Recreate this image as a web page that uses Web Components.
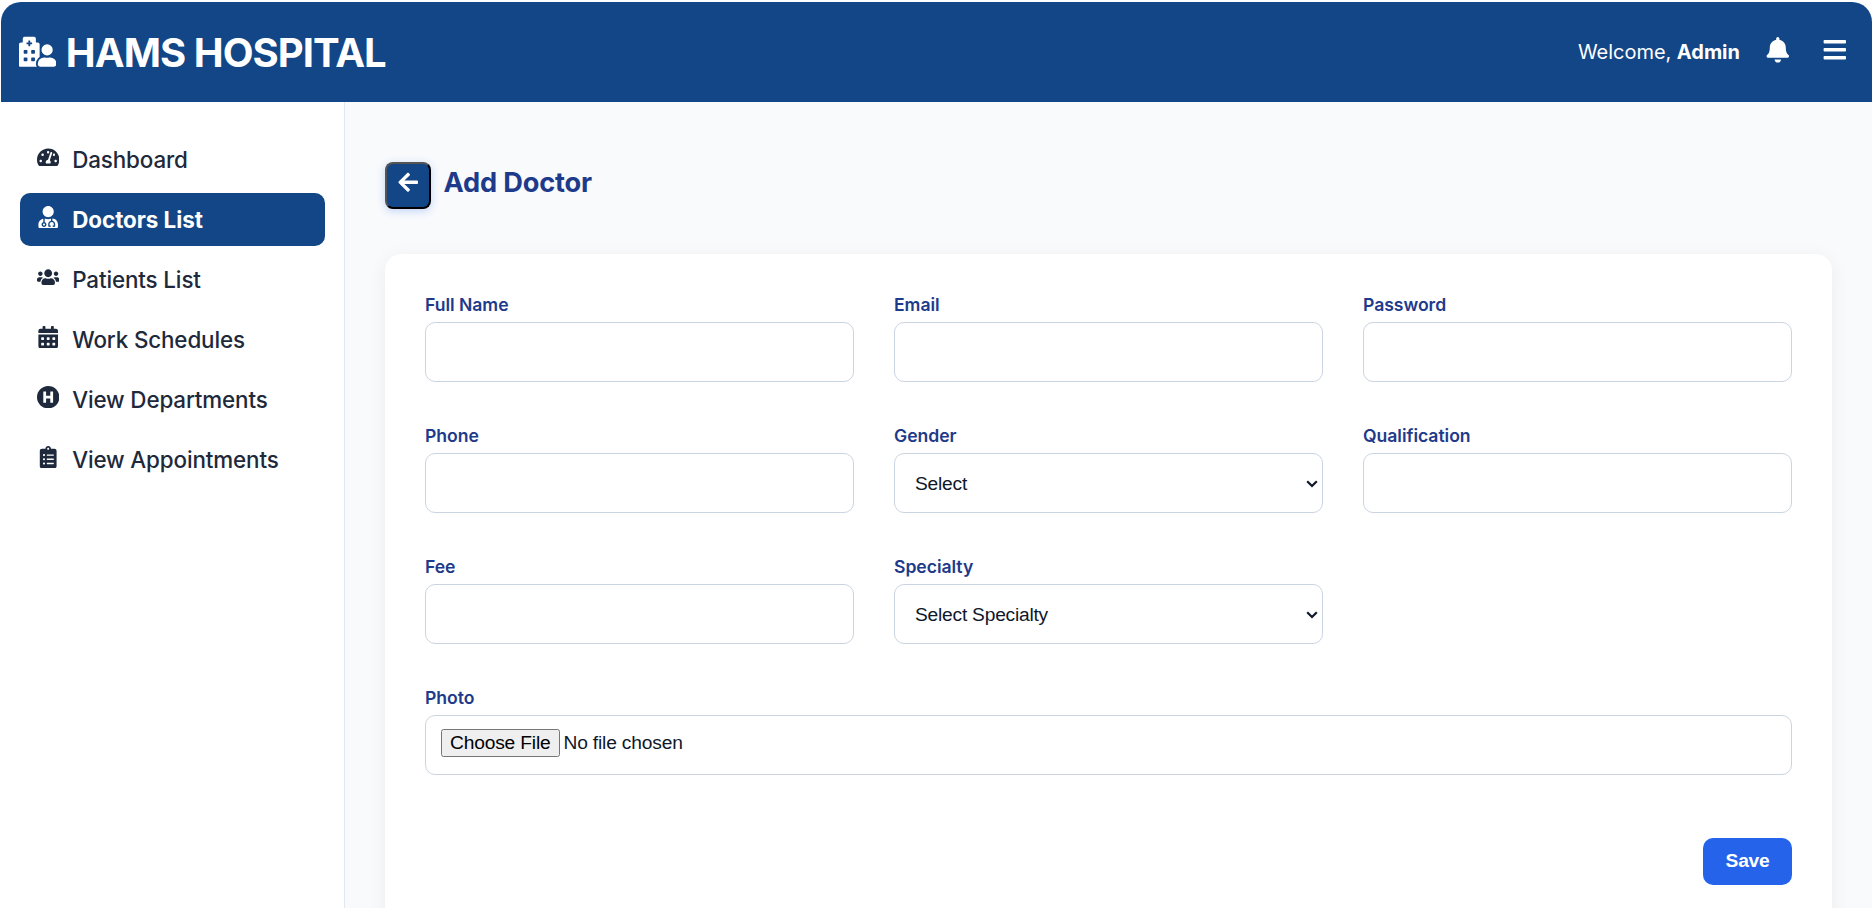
<!DOCTYPE html>
<html lang="en">
<head>
<meta charset="utf-8">
<title>HAMS Hospital - Add Doctor</title>
<style>
  html, body { margin: 0; height: 100%; background: #fff; }
  body { font-family: Inter, "Liberation Sans", sans-serif; overflow: hidden; }
</style>
</head>
<body>
<hams-app>
  <hams-header slot="header" heading="HAMS HOSPITAL" user="Admin"></hams-header>
  <hams-sidebar slot="sidebar">
    <hams-nav-item icon="dashboard">Dashboard</hams-nav-item>
    <hams-nav-item icon="doctor" active>Doctors List</hams-nav-item>
    <hams-nav-item icon="patients">Patients List</hams-nav-item>
    <hams-nav-item icon="calendar">Work Schedules</hams-nav-item>
    <hams-nav-item icon="hospital">View Departments</hams-nav-item>
    <hams-nav-item icon="clipboard">View Appointments</hams-nav-item>
  </hams-sidebar>
  <hams-page-title>Add Doctor</hams-page-title>
  <hams-form-card>
    <hams-field label="Full Name"></hams-field>
    <hams-field label="Email"></hams-field>
    <hams-field label="Password" kind="password"></hams-field>
    <hams-field label="Phone"></hams-field>
    <hams-field label="Gender" kind="select" placeholder="Select"></hams-field>
    <hams-field label="Qualification"></hams-field>
    <hams-field label="Fee"></hams-field>
    <hams-field label="Specialty" kind="select" placeholder="Select Specialty"></hams-field>
    <hams-field label="Photo" kind="file" wide></hams-field>
    <hams-save-button slot="actions">Save</hams-save-button>
  </hams-form-card>
</hams-app>
<script>
const ICONS = {
  logo: ['0 0 640 512', 'M480 320a96 96 0 1 0-96-96 96 96 0 0 0 96 96zm48 32a22.88 22.88 0 0 0-7.06 1.09 124.76 124.76 0 0 1-81.88 0A22.82 22.82 0 0 0 432 352a112 112 0 0 0-112 112.62c.14 26.26 21.73 47.38 48 47.38h224c26.27 0 47.86-21.12 48-47.38A112 112 0 0 0 528 352zm-198.09 10.45A145.19 145.19 0 0 1 352 344.62V128a32 32 0 0 0-32-32h-32V32a32 32 0 0 0-32-32H96a32 32 0 0 0-32 32v64H32a32 32 0 0 0-32 32v368a16 16 0 0 0 16 16h288.31A78.62 78.62 0 0 1 288 464.79a143.06 143.06 0 0 1 41.91-102.34zM144 404a12 12 0 0 1-12 12H92a12 12 0 0 1-12-12v-40a12 12 0 0 1 12-12h40a12 12 0 0 1 12 12zm0-128a12 12 0 0 1-12 12H92a12 12 0 0 1-12-12v-40a12 12 0 0 1 12-12h40a12 12 0 0 1 12 12zm48-122a6 6 0 0 1-6 6h-20a6 6 0 0 1-6-6v-26h-26a6 6 0 0 1-6-6v-20a6 6 0 0 1 6-6h26V70a6 6 0 0 1 6-6h20a6 6 0 0 1 6 6v26h26a6 6 0 0 1 6 6v20a6 6 0 0 1-6 6h-26zm80 250a12 12 0 0 1-12 12h-40a12 12 0 0 1-12-12v-40a12 12 0 0 1 12-12h40a12 12 0 0 1 12 12zm0-128a12 12 0 0 1-12 12h-40a12 12 0 0 1-12-12v-40a12 12 0 0 1 12-12h40a12 12 0 0 1 12 12z'],
  bell: ['0 0 448 512', 'M224 512c35.32 0 63.97-28.65 63.97-64H160.03c0 35.35 28.65 64 63.97 64zm215.39-149.71c-19.32-20.76-55.47-51.99-55.47-154.29 0-77.7-54.48-139.9-127.94-155.16V32c0-17.67-14.32-32-31.98-32s-31.98 14.33-31.98 32v20.84C118.56 68.1 64.08 130.3 64.08 208c0 102.3-36.15 133.53-55.47 154.29-6 6.45-8.66 14.16-8.61 21.71.11 16.4 12.98 32 32.1 32h383.8c19.12 0 32-15.6 32.1-32 .05-7.55-2.61-15.27-8.61-21.71z'],
  bars: ['0 0 448 512', 'M16 132h416c8.837 0 16-7.163 16-16V76c0-8.837-7.163-16-16-16H16C7.163 60 0 67.163 0 76v40c0 8.837 7.163 16 16 16zm0 160h416c8.837 0 16-7.163 16-16v-40c0-8.837-7.163-16-16-16H16c-8.837 0-16 7.163-16 16v40c0 8.837 7.163 16 16 16zm0 160h416c8.837 0 16-7.163 16-16v-40c0-8.837-7.163-16-16-16H16c-8.837 0-16 7.163-16 16v40c0 8.837 7.163 16 16 16z'],
  back: ['0 0 448 512', 'M257.5 445.1l-22.2 22.2c-9.4 9.4-24.6 9.4-33.9 0L7 273c-9.4-9.4-9.4-24.6 0-33.9L201.4 44.7c9.4-9.4 24.6-9.4 33.9 0l22.2 22.2c9.5 9.5 9.3 25-.4 34.3L136.6 216H424c13.3 0 24 10.7 24 24v32c0 13.3-10.7 24-24 24H136.6l120.5 114.8c9.8 9.3 10 24.8.4 34.3z'],
  dashboard: ['0 0 576 512', 'M288 32C128.94 32 0 160.94 0 320c0 52.8 14.25 102.26 39.06 144.8 5.61 9.62 16.3 15.2 27.44 15.2h443c11.14 0 21.83-5.58 27.44-15.2C561.75 422.26 576 372.8 576 320c0-159.06-128.94-288-288-288zm0 64c14.71 0 26.58 10.13 30.32 23.65-1.11 2.26-2.64 4.23-3.45 6.67l-9.22 27.67c-5.13 3.49-10.97 6.01-17.64 6.01-17.67 0-32-14.33-32-32S270.33 96 288 96zM96 384c-17.67 0-32-14.33-32-32s14.33-32 32-32 32 14.33 32 32-14.33 32-32 32zm48-160c-17.67 0-32-14.33-32-32s14.33-32 32-32 32 14.33 32 32-14.33 32-32 32zm246.77-72.41l-61.33 184C343.13 347.33 352 364.54 352 384c0 11.72-3.38 22.55-8.88 32H232.88c-5.5-9.45-8.88-20.28-8.88-32 0-33.94 26.5-61.43 59.9-63.59l61.34-184.01c4.17-12.56 17.73-19.45 30.36-15.17 12.57 4.19 19.35 17.79 15.17 30.36zm14.66 57.2l15.52-46.55c3.47-1.29 7.13-2.23 11.05-2.23 17.67 0 32 14.33 32 32s-14.33 32-32 32c-11.38-.01-20.89-6.28-26.57-15.22zM480 384c-17.67 0-32-14.33-32-32s14.33-32 32-32 32 14.33 32 32-14.33 32-32 32z'],
  doctor: ['0 0 448 512', 'M224 256c70.7 0 128-57.3 128-128S294.7 0 224 0 96 57.3 96 128s57.3 128 128 128zM104 424c0 13.3 10.7 24 24 24s24-10.7 24-24-10.7-24-24-24-24 10.7-24 24zm216-135.4v49c36.5 7.4 64 39.8 64 78.4v41.7c0 7.6-5.4 14.2-12.9 15.7l-32.2 6.4c-4.3.9-8.5-1.9-9.4-6.3l-3.1-15.7c-.9-4.3 1.9-8.6 6.3-9.4l19.3-3.9V416c0-62.8-96-65.1-96 1.9v26.7l19.3 3.9c4.3.9 7.1 5.1 6.3 9.4l-3.1 15.7c-.9 4.3-5.1 7.1-9.4 6.3l-31.2-4.2c-7.9-1.1-13.8-7.8-13.8-15.9V416c0-38.6 27.5-70.9 64-78.4v-45.2c-2.2.7-4.4 1.1-6.6 1.9-18 6.3-37.3 9.8-57.4 9.8s-39.4-3.5-57.4-9.8c-7.4-2.6-14.9-4.2-22.6-5.2v81.6c23.1 6.9 40 28.1 40 53.4 0 30.9-25.1 56-56 56s-56-25.1-56-56c0-25.3 16.9-46.5 40-53.4v-80.4C48.5 301 0 355.8 0 422.4v44.8C0 491.9 20.1 512 44.8 512h358.4c24.7 0 44.8-20.1 44.8-44.8v-44.8c0-72-56.8-130.3-128-133.8z'],
  patients: ['0 0 640 512', 'M96 224c35.3 0 64-28.7 64-64s-28.7-64-64-64-64 28.7-64 64 28.7 64 64 64zm448 0c35.3 0 64-28.7 64-64s-28.7-64-64-64-64 28.7-64 64 28.7 64 64 64zm32 32h-64c-17.6 0-33.5 7.1-45.1 18.6 40.3 22.1 68.9 62 75.1 109.4h66c17.7 0 32-14.3 32-32v-32c0-35.3-28.7-64-64-64zm-256 0c61.9 0 112-50.1 112-112S381.9 32 320 32 208 82.1 208 144s50.1 112 112 112zm76.8 32h-8.3c-20.8 10-43.9 16-68.5 16s-47.6-6-68.5-16h-8.3C179.6 288 128 339.6 128 403.2V432c0 26.5 21.5 48 48 48h288c26.5 0 48-21.5 48-48v-28.8c0-63.6-51.6-115.2-115.2-115.2zm-223.7-13.4C161.5 263.1 145.6 256 128 256H64c-35.3 0-64 28.7-64 64v32c0 17.7 14.3 32 32 32h65.9c6.3-47.4 34.9-87.3 75.2-109.4z'],
  calendar: ['0 0 448 512', 'M0 464c0 26.5 21.5 48 48 48h352c26.5 0 48-21.5 48-48V192H0v272zm320-196c0-6.6 5.4-12 12-12h40c6.6 0 12 5.4 12 12v40c0 6.6-5.4 12-12 12h-40c-6.6 0-12-5.4-12-12v-40zm0 128c0-6.6 5.4-12 12-12h40c6.6 0 12 5.4 12 12v40c0 6.6-5.4 12-12 12h-40c-6.6 0-12-5.4-12-12v-40zM192 268c0-6.6 5.4-12 12-12h40c6.6 0 12 5.4 12 12v40c0 6.6-5.4 12-12 12h-40c-6.6 0-12-5.4-12-12v-40zm0 128c0-6.6 5.4-12 12-12h40c6.6 0 12 5.4 12 12v40c0 6.6-5.4 12-12 12h-40c-6.6 0-12-5.4-12-12v-40zM64 268c0-6.6 5.4-12 12-12h40c6.6 0 12 5.4 12 12v40c0 6.6-5.4 12-12 12H76c-6.6 0-12-5.4-12-12v-40zm0 128c0-6.6 5.4-12 12-12h40c6.6 0 12 5.4 12 12v40c0 6.6-5.4 12-12 12H76c-6.6 0-12-5.4-12-12v-40zM400 64h-48V16c0-8.8-7.2-16-16-16h-32c-8.8 0-16 7.2-16 16v48H160V16c0-8.8-7.2-16-16-16h-32c-8.8 0-16 7.2-16 16v48H48C21.5 64 0 85.5 0 112v48h448v-48c0-26.5-21.5-48-48-48z'],
  hospital: ['0 0 512 512', 'M256 0C114.6 0 0 114.6 0 256s114.6 256 256 256 256-114.6 256-256S397.4 0 256 0zm112 376c0 4.4-3.6 8-8 8h-48c-4.4 0-8-3.6-8-8v-88h-96v88c0 4.4-3.6 8-8 8h-48c-4.4 0-8-3.6-8-8V136c0-4.4 3.6-8 8-8h48c4.4 0 8 3.6 8 8v88h96v-88c0-4.4 3.6-8 8-8h48c4.4 0 8 3.6 8 8v240z'],
  clipboard: ['0 0 384 512', 'M336 64h-80c0-35.3-28.7-64-64-64s-64 28.7-64 64H48C21.5 64 0 85.5 0 112v352c0 26.5 21.5 48 48 48h288c26.5 0 48-21.5 48-48V112c0-26.5-21.5-48-48-48zM96 424c-13.3 0-24-10.7-24-24s10.7-24 24-24 24 10.7 24 24-10.7 24-24 24zm0-96c-13.3 0-24-10.7-24-24s10.7-24 24-24 24 10.7 24 24-10.7 24-24 24zm0-96c-13.3 0-24-10.7-24-24s10.7-24 24-24 24 10.7 24 24-10.7 24-24 24zm96-192c13.3 0 24 10.7 24 24s-10.7 24-24 24-24-10.7-24-24 10.7-24 24-24zm128 368c0 4.4-3.6 8-8 8H168c-4.4 0-8-3.6-8-8v-16c0-4.4 3.6-8 8-8h144c4.4 0 8 3.6 8 8v16zm0-96c0 4.4-3.6 8-8 8H168c-4.4 0-8-3.6-8-8v-16c0-4.4 3.6-8 8-8h144c4.4 0 8 3.6 8 8v16zm0-96c0 4.4-3.6 8-8 8H168c-4.4 0-8-3.6-8-8v-16c0-4.4 3.6-8 8-8h144c4.4 0 8 3.6 8 8v16z']
};

class Base extends HTMLElement {
  connectedCallback() {
    if (this.shadowRoot) return;
    this.attachShadow({ mode: 'open' }).innerHTML = this.view();
  }
}

// Square icon, one em on each side.
customElements.define('hams-icon', class extends Base {
  view() {
    const [box, d] = ICONS[this.getAttribute('name')];
    return `<style>:host{display:block;flex:none;width:1em;height:1em}svg{display:block;width:1em;height:1em}</style>
      <svg viewBox="${box}" fill="currentColor" aria-hidden="true"><path d="${d}"/></svg>`;
  }
});

customElements.define('hams-app', class extends Base {
  view() {
    return `<style>
      :host{display:grid;box-sizing:border-box;width:1871px;height:906px;margin:2px 0 0 1px;
        grid-template:100px 1fr / 344px 1fr;overflow:hidden}
      .top{grid-column:1/-1}
      main{background:#f8fafc;padding:60px 40px 0;overflow:hidden}
    </style>
    <div class="top"><slot name="header"></slot></div>
    <slot name="sidebar"></slot>
    <main><slot></slot></main>`;
  }
});

customElements.define('hams-header', class extends Base {
  view() {
    return `<style>
      :host{display:flex;box-sizing:border-box;height:100px;padding:0 24px 0 17.7px;align-items:center;
        justify-content:space-between;background:#134686;color:#fff;border-radius:20px 20px 0 0}
      .brand,.right{display:flex;align-items:center}
      .brand{gap:9.6px;font-size:40px;font-weight:700;line-height:48px;letter-spacing:-.95px}
      .brand hams-icon{font-size:37.5px;letter-spacing:0}
      h1{margin:2px 0 0;font:inherit}
      .hello{font-size:20px;line-height:24px;letter-spacing:-.03px;margin-right:25.5px}
      .right hams-icon{font-size:25.6px;margin-bottom:4px}
      .right .menu{margin-left:31.4px}
    </style>
    <div class="brand"><hams-icon name="logo"></hams-icon><h1>${this.getAttribute('heading')}</h1></div>
    <div class="right"><span class="hello">Welcome, <b>${this.getAttribute('user')}</b></span>
      <hams-icon name="bell"></hams-icon><hams-icon class="menu" name="bars"></hams-icon></div>`;
  }
});

customElements.define('hams-sidebar', class extends Base {
  view() {
    return `<style>
      :host{display:block;box-sizing:border-box;background:#fff;border-right:1px solid #e2e8f0;padding:31px 19px 0 19px}
      nav{display:flex;flex-direction:column;gap:7px}
    </style><nav><slot></slot></nav>`;
  }
});

customElements.define('hams-nav-item', class extends Base {
  view() {
    return `<style>
      :host{display:flex;box-sizing:border-box;height:53px;padding:0 17px;gap:12.8px;align-items:center;border-radius:10px;
        color:#1e293b;font-size:22.4px;font-weight:500;letter-spacing:-.13px}
      :host([active]){background:#134686;color:#fff;font-weight:700;letter-spacing:-.04px}
      hams-icon{margin-bottom:5px}
      span{line-height:27px}
    </style><hams-icon name="${this.getAttribute('icon')}"></hams-icon><span><slot></slot></span>`;
  }
});

customElements.define('hams-page-title', class extends Base {
  view() {
    return `<style>
      :host{display:flex;gap:12.5px;height:47px;margin-bottom:45px;color:#1e3a8a}
      button{box-sizing:border-box;width:46px;height:47px;display:flex;align-items:center;justify-content:center;padding:0 0 7px;
        background:#134686;color:#fff;border:2px outset #000;border-radius:8px;font-size:22.4px;
        box-shadow:0 2px 8px rgba(37,99,235,.25)}
      h2{margin:4px 0 0;font-size:27.2px;font-weight:700;line-height:33px;letter-spacing:-.17px}
    </style>
    <button aria-label="Back"><hams-icon name="back"></hams-icon></button><h2><slot></slot></h2>`;
  }
});

customElements.define('hams-form-card', class extends Base {
  view() {
    return `<style>
      :host{display:block;box-sizing:border-box;height:720px;padding:40px;background:#fff;border-radius:16px;
        box-shadow:0 4px 20px rgba(0,0,0,.06)}
      form{display:grid;grid-template-columns:repeat(3,1fr);gap:43px 40px}
      .actions{display:flex;justify-content:flex-end;margin-top:63px}
    </style><form><slot></slot></form><div class="actions"><slot name="actions"></slot></div>`;
  }
});

customElements.define('hams-field', class extends Base {
  view() {
    const kind = this.getAttribute('kind') || 'text';
    const label = this.getAttribute('label');
    const control = kind === 'select'
      ? `<select id="c"><option>${this.getAttribute('placeholder')}</option></select>
         <svg viewBox="0 0 12 8" aria-hidden="true"><path d="M1.2 1.2 6 6 10.8 1.2" fill="none" stroke="#0f172a" stroke-width="2.2"/></svg>`
      : `<input id="c" type="${kind}">`;
    return `<style>
      :host{display:flex;flex-direction:column;min-width:0}
      :host([wide]){grid-column:1/-1}
      label{height:28px;line-height:22px;font-size:17.6px;font-weight:600;letter-spacing:-.04px;color:#1e3a8a}
      .control{position:relative;display:flex}
      input,select{box-sizing:border-box;width:100%;height:60px;margin:0;padding:0 16px;border:1px solid #cbd5e1;border-radius:10px;
        background:#fff;color:#0f172a;font:19.2px "Liberation Sans",Arial,sans-serif;letter-spacing:-.22px}
      select{appearance:none;padding:0 20px}
      svg{position:absolute;right:5px;top:27px;width:12px;height:8px;pointer-events:none}
      input[type=file]{padding:13px 15px;letter-spacing:-.17px}
      input::file-selector-button{padding:1px 7px;letter-spacing:-.17px}
    </style><label for="c">${label}</label><div class="control">${control}</div>`;
  }
});

customElements.define('hams-save-button', class extends Base {
  view() {
    return `<style>
      :host{display:block}
      button{box-sizing:border-box;width:89px;height:47px;padding:0 0 2px;border:0;border-radius:10px;background:#2563eb;color:#fff;
        font:bold 19.2px "Liberation Sans",Arial,sans-serif;letter-spacing:-.25px}
    </style><button><slot></slot></button>`;
  }
});
</script>
</body>
</html>
